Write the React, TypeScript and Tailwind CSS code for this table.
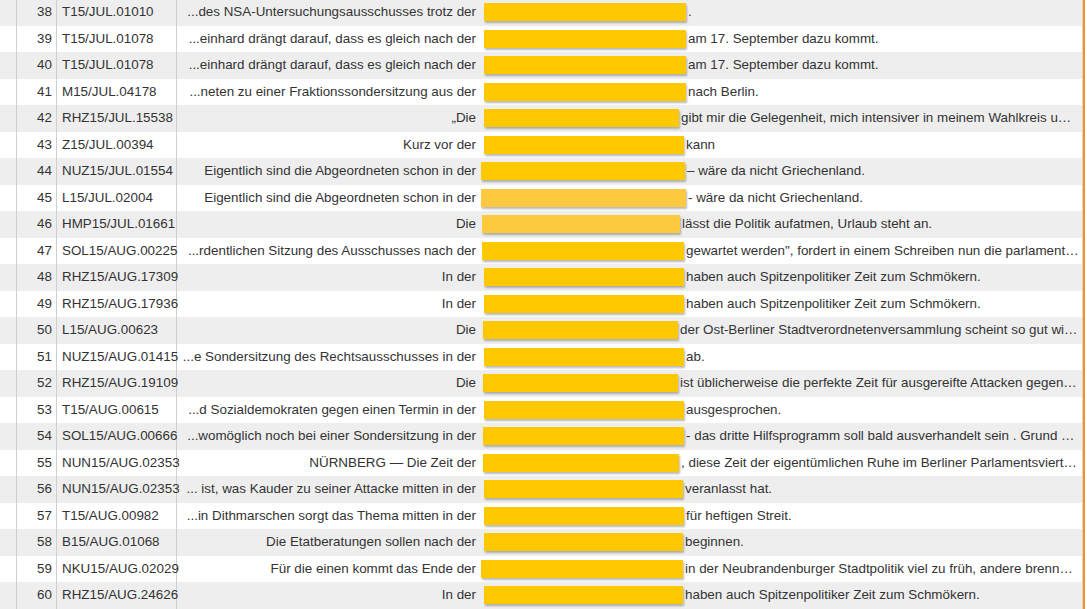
import type { CSSProperties } from "react"

type Row = {
  n: number
  src: string
  left: string
  kw: [number, number]
  right: string
  light?: boolean
}

// keyword box: [start x, end x] in page px; the left cell ends at 484
const rows: Row[] = [
  { n: 38, src: "T15/JUL.01010", left: "...des NSA-Untersuchungsausschusses trotz der", kw: [484, 686], right: "." },
  { n: 39, src: "T15/JUL.01078", left: "...einhard drängt darauf, dass es gleich nach der", kw: [484, 686], right: "am 17. September dazu kommt." },
  { n: 40, src: "T15/JUL.01078", left: "...einhard drängt darauf, dass es gleich nach der", kw: [484, 686], right: "am 17. September dazu kommt." },
  { n: 41, src: "M15/JUL.04178", left: "...neten zu einer Fraktionssondersitzung aus der", kw: [484, 686], right: "nach Berlin." },
  { n: 42, src: "RHZ15/JUL.15538", left: "„Die", kw: [484, 679], right: "gibt mir die Gelegenheit, mich intensiver in meinem Wahlkreis umzuschauen." },
  { n: 43, src: "Z15/JUL.00394", left: "Kurz vor der", kw: [484, 684], right: "kann" },
  { n: 44, src: "NUZ15/JUL.01554", left: "Eigentlich sind die Abgeordneten schon in der", kw: [481, 685], right: "– wäre da nicht Griechenland." },
  { n: 45, src: "L15/JUL.02004", left: "Eigentlich sind die Abgeordneten schon in der", kw: [481, 686], right: "- wäre da nicht Griechenland.", light: true },
  { n: 46, src: "HMP15/JUL.01661", left: "Die", kw: [482, 680], right: "lässt die Politik aufatmen, Urlaub steht an.", light: true },
  { n: 47, src: "SOL15/AUG.00225", left: "...rdentlichen Sitzung des Ausschusses nach der", kw: [482, 684], right: "gewartet werden\", fordert in einem Schreiben nun die parlamentarische Opposition." },
  { n: 48, src: "RHZ15/AUG.17309", left: "In der", kw: [484, 684], right: "haben auch Spitzenpolitiker Zeit zum Schmökern." },
  { n: 49, src: "RHZ15/AUG.17936", left: "In der", kw: [484, 684], right: "haben auch Spitzenpolitiker Zeit zum Schmökern." },
  { n: 50, src: "L15/AUG.00623", left: "Die", kw: [483, 678], right: "der Ost-Berliner Stadtverordnetenversammlung scheint so gut wie vorbei." },
  { n: 51, src: "NUZ15/AUG.01415", left: "...e Sondersitzung des Rechtsausschusses in der", kw: [484, 684], right: "ab." },
  { n: 52, src: "RHZ15/AUG.19109", left: "Die", kw: [483, 678], right: "ist üblicherweise die perfekte Zeit für ausgereifte Attacken gegen die Regierung." },
  { n: 53, src: "T15/AUG.00615", left: "...d Sozialdemokraten gegen einen Termin in der", kw: [484, 684], right: "ausgesprochen." },
  { n: 54, src: "SOL15/AUG.00666", left: "...womöglich noch bei einer Sondersitzung in der", kw: [483, 684], right: "- das dritte Hilfsprogramm soll bald ausverhandelt sein . Grund dafür" },
  { n: 55, src: "NUN15/AUG.02353", left: "NÜRNBERG — Die Zeit der", kw: [483, 679], right: ", diese Zeit der eigentümlichen Ruhe im Berliner Parlamentsviertel, ist vorbei." },
  { n: 56, src: "NUN15/AUG.02353", left: "... ist, was Kauder zu seiner Attacke mitten in der", kw: [484, 683], right: "veranlasst hat." },
  { n: 57, src: "T15/AUG.00982", left: "...in Dithmarschen sorgt das Thema mitten in der", kw: [484, 684], right: "für heftigen Streit." },
  { n: 58, src: "B15/AUG.01068", left: "Die Etatberatungen sollen nach der", kw: [484, 683], right: "beginnen." },
  { n: 59, src: "NKU15/AUG.02029", left: "Für die einen kommt das Ende der", kw: [481, 683], right: "in der Neubrandenburger Stadtpolitik viel zu früh, andere brennen darauf." },
  { n: 60, src: "RHZ15/AUG.24626", left: "In der", kw: [484, 683], right: "haben auch Spitzenpolitiker Zeit zum Schmökern." },
]

function KwicRow({ row, striped }: { row: Row; striped: boolean }) {
  const [start, end] = row.kw
  const box: CSSProperties = { marginLeft: start - 484, width: end - start }
  return (
    <div
      className={`flex h-[26.5px] items-center whitespace-nowrap ${striped ? "bg-[#eeeeee]" : "bg-white"}`}
    >
      <div className="h-full w-[17px] shrink-0 border-r border-[#cfcfcf]" />
      <div className="flex h-full w-[40px] shrink-0 items-center justify-end border-r border-[#cfcfcf] pr-[4px]">
        {row.n}
      </div>
      <div className="relative z-10 flex h-full w-[120px] shrink-0 items-center border-r border-[#cfcfcf] pl-[5px]">
        {row.src}
      </div>
      <div className="flex h-full w-[307px] shrink-0 items-center justify-end overflow-hidden pr-[8px]">
        <span>{row.left}</span>
      </div>
      <div
        className={`h-[18px] shrink-0 shadow-[1px_2px_2px_rgba(0,0,0,0.28)] ${row.light ? "bg-[#fdc93e]" : "bg-[#ffc800]"}`}
        style={box}
      />
      <div className="min-w-0 flex-1 truncate pl-[2px] pr-[3px]">{row.right}</div>
    </div>
  )
}

export default function App() {
  return (
    <div className="flex h-[609px] w-[1087px] overflow-hidden bg-white font-['Liberation_Sans',Arial,sans-serif] text-[13.4px] text-[#333333]">
      <div className="-mt-[1px] w-[1083px] shrink-0 border-r border-[#d6d6d6]">
        {rows.map((row, i) => (
          <KwicRow key={row.n} row={row} striped={i % 2 === 0} />
        ))}
      </div>
      <div className="h-full w-[2px] shrink-0 bg-[#f7901e]" />
    </div>
  )
}
